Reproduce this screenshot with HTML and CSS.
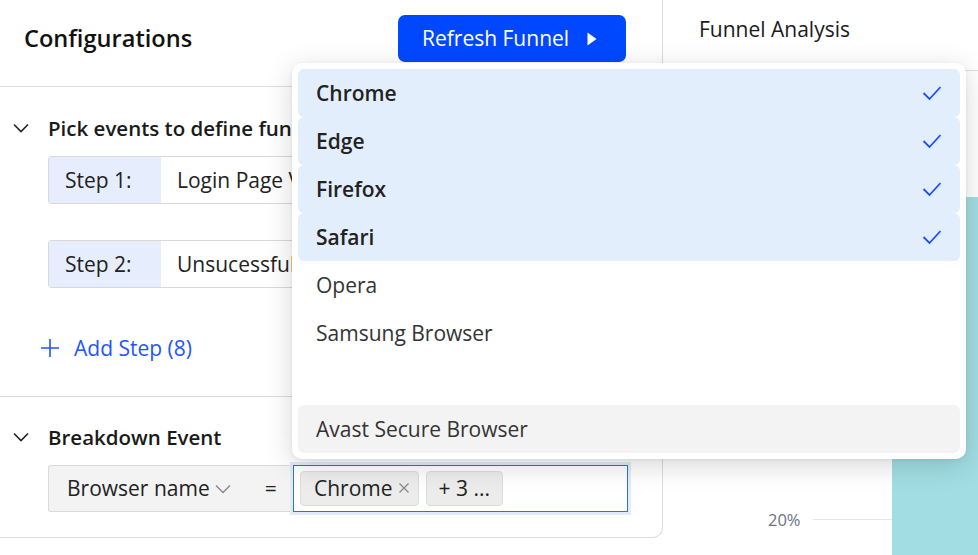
FILE: index.html
```html
<!DOCTYPE html>
<html lang="en">
<head>
<meta charset="utf-8">
<title>Funnel Configurations</title>
<link rel="stylesheet" href="styles.css">
</head>
<body>
<div class="app">
  <section class="config">
    <header class="config-head">
      <h1 class="config-title">Configurations</h1>
      <button class="btn-primary" type="button">
        <span>Refresh Funnel</span>
        <svg class="btn-icon" width="10" height="14" viewBox="0 0 10 14"><path d="M0.5 0.5 L9.5 7 L0.5 13.5 Z" fill="#fff"/></svg>
      </button>
    </header>

    <div class="section section-steps">
      <div class="section-head">
        <svg class="chevron" width="16" height="10" viewBox="0 0 16 10"><path d="M1 1.5 L8 8.5 L15 1.5" fill="none" stroke="#222" stroke-width="1.6"/></svg>
        <h2 class="section-title">Pick events to define funnel</h2>
      </div>
      <div class="step-row">
        <span class="step-label">Step 1:</span>
        <span class="step-value">Login Page Viewed</span>
      </div>
      <div class="step-row">
        <span class="step-label">Step 2:</span>
        <span class="step-value">Unsucessful Login</span>
      </div>
      <button class="add-step" type="button">
        <svg width="20" height="20" viewBox="0 0 20 20"><path d="M10 1 V19 M1 10 H19" stroke="#1f55ff" stroke-width="1.6" fill="none"/></svg>
        <span>Add Step (8)</span>
      </button>
    </div>

    <div class="section section-breakdown">
      <div class="section-head">
        <svg class="chevron" width="16" height="10" viewBox="0 0 16 10"><path d="M1 1.5 L8 8.5 L15 1.5" fill="none" stroke="#222" stroke-width="1.6"/></svg>
        <h2 class="section-title">Breakdown Event</h2>
      </div>
      <div class="breakdown-row">
        <div class="prop-select">
          <span>Browser name</span>
          <svg class="prop-chevron" width="16" height="10" viewBox="0 0 16 10"><path d="M1 1.5 L8 8.5 L15 1.5" fill="none" stroke="#888" stroke-width="1.4"/></svg>
          <span class="equals">=</span>
        </div>
        <div class="multi-select">
          <span class="tag">Chrome <svg width="12" height="12" viewBox="0 0 12 12"><path d="M1.5 1.5 L10.5 10.5 M10.5 1.5 L1.5 10.5" stroke="#888" stroke-width="1.3"/></svg></span>
          <span class="tag tag-more">+ 3 ...</span>
        </div>
      </div>
    </div>
  </section>

  <section class="analysis">
    <header class="analysis-head">Funnel Analysis</header>
    <div class="chart">
      <div class="grid-line">
        <span class="grid-label">20%</span>
        <span class="grid-rule"></span>
      </div>
      <div class="chart-bar"></div>
    </div>
  </section>

  <ul class="dropdown">
    <li class="option selected">Chrome <svg class="check" width="20" height="16" viewBox="0 0 20 16"><path d="M1.5 8 L7.5 14 L18.5 2" fill="none" stroke="#1a4fff" stroke-width="1.8"/></svg></li>
    <li class="option selected">Edge <svg class="check" width="20" height="16" viewBox="0 0 20 16"><path d="M1.5 8 L7.5 14 L18.5 2" fill="none" stroke="#1a4fff" stroke-width="1.8"/></svg></li>
    <li class="option selected">Firefox <svg class="check" width="20" height="16" viewBox="0 0 20 16"><path d="M1.5 8 L7.5 14 L18.5 2" fill="none" stroke="#1a4fff" stroke-width="1.8"/></svg></li>
    <li class="option selected">Safari <svg class="check" width="20" height="16" viewBox="0 0 20 16"><path d="M1.5 8 L7.5 14 L18.5 2" fill="none" stroke="#1a4fff" stroke-width="1.8"/></svg></li>
    <li class="option">Opera</li>
    <li class="option">Samsung Browser</li>
    <li class="option"></li>
    <li class="option hover">Avast Secure Browser</li>
  </ul>
</div>
</body>
</html>
```

FILE: styles.css
```css
* {
  box-sizing: border-box;
}

html,
body {
  margin: 0;
  padding: 0;
  background: #fff;
}

body {
  font-family: "Open Sans", "Noto Sans", sans-serif;
  color: #222;
}

.app {
  position: relative;
  display: flex;
  width: 978px;
  height: 555px;
  overflow: hidden;
}

/* Left configuration card */
.config {
  width: 663px;
  height: 538px;
  flex: none;
  border-right: 1px solid #dcdcdc;
  border-bottom: 1px solid #dcdcdc;
  border-bottom-right-radius: 10px;
}

.config-head {
  height: 87px;
  display: flex;
  align-items: center;
  justify-content: space-between;
  padding: 4px 36px 14px 24px;
  border-bottom: 1px solid #dcdcdc;
}

.config-title {
  margin: 0;
  font-size: 23.6px;
  font-weight: 600;
  color: #111;
}

.btn-primary {
  display: flex;
  align-items: center;
  gap: 18px;
  width: 228px;
  height: 47px;
  padding: 0 0 0 24px;
  border: none;
  border-radius: 7px;
  background: #0048ff;
  color: #fff;
  font-family: inherit;
  font-size: 21px;
}

.btn-icon {
  margin-top: 1px;
}

.section {
  border-bottom: 1px solid #dcdcdc;
}

.section-steps {
  height: 310px;
  padding-top: 27px;
}

.section-breakdown {
  height: 140px;
  padding-top: 26px;
  border-bottom: none;
}

.section-head {
  display: flex;
  align-items: center;
  height: 28px;
  padding-left: 13px;
  gap: 19px;
}

.section-title {
  margin: 0;
  font-size: 20.5px;
  font-weight: 600;
  color: #1a1a1a;
  white-space: nowrap;
}

.step-row {
  display: flex;
  width: 579px;
  height: 48px;
  margin-left: 48px;
  border: 1px solid #d9d9d9;
  border-radius: 3px;
  overflow: hidden;
  font-size: 21px;
}

.section-steps .section-head + .step-row {
  margin-top: 14px;
}

.step-row + .step-row {
  margin-top: 36px;
}

.step-label {
  display: flex;
  align-items: center;
  width: 112px;
  padding-left: 16px;
  background: #e6edfc;
  color: #222;
}

.step-value {
  display: flex;
  align-items: center;
  padding-left: 16px;
  background: #fff;
  color: #222;
  white-space: nowrap;
}

.add-step {
  display: flex;
  align-items: center;
  gap: 14px;
  margin: 46px 0 0 40px;
  padding: 0;
  border: none;
  background: none;
  color: #1f55ff;
  font-family: inherit;
  font-size: 21px;
}

.breakdown-row {
  display: flex;
  align-items: center;
  margin: 13px 0 0 48px;
  height: 48px;
}

.prop-select {
  display: flex;
  align-items: center;
  width: 245px;
  height: 47px;
  padding-left: 18px;
  background: #f3f3f3;
  border: 1px solid #dadada;
  border-right: none;
  border-radius: 3px 0 0 3px;
  font-size: 21px;
  color: #222;
}

.prop-chevron {
  margin: 2px 0 0 5px;
}

.equals {
  margin-left: 34px;
}

.multi-select {
  display: flex;
  align-items: center;
  gap: 7px;
  width: 335px;
  height: 47px;
  padding-left: 6px;
  border: 1px solid #2f6bff;
  box-shadow: 0 0 0 3px #e2ebf9;
  background: #fff;
}

.tag {
  display: flex;
  align-items: center;
  gap: 5px;
  height: 35px;
  padding: 0 8px 0 13px;
  background: #ececec;
  border: 1px solid #dcdcdc;
  border-radius: 4px;
  font-size: 21px;
  color: #222;
}

.tag-more {
  padding: 0 12px;
}

/* Right analysis area */
.analysis {
  flex: 1;
  position: relative;
}

.analysis-head {
  height: 71px;
  padding: 15px 0 0 36px;
  font-size: 21px;
  color: #1a1a1a;
  border-bottom: 1px solid #dcdcdc;
}

.chart {
  position: relative;
  height: 484px;
}

.chart-bar {
  position: absolute;
  left: 229px;
  top: 126px;
  right: 0;
  bottom: 0;
  background: #a2dde4;
}

.grid-line {
  position: absolute;
  left: 105px;
  top: 437px;
  width: 124px;
  display: flex;
  align-items: center;
  gap: 12px;
}

.grid-label {
  font-size: 16.5px;
  color: #6b7280;
}

.grid-rule {
  flex: 1;
  height: 1px;
  background: #e6e6e6;
}

/* Browser options popover */
.dropdown {
  position: absolute;
  left: 292px;
  top: 63px;
  width: 674px;
  height: 396px;
  margin: 0;
  padding: 6px;
  list-style: none;
  background: #fff;
  border-radius: 10px;
  box-shadow: 0 6px 28px rgba(0, 0, 0, 0.16), 0 1px 4px rgba(0, 0, 0, 0.06);
}

.option {
  display: flex;
  align-items: center;
  justify-content: space-between;
  height: 48px;
  padding: 0 18px 0 18px;
  border-radius: 6px;
  font-size: 21px;
  color: #333;
}

.option.selected {
  background: #e3eefd;
  font-weight: 600;
  color: #222;
}

.option.hover {
  background: #f3f3f3;
}
```
